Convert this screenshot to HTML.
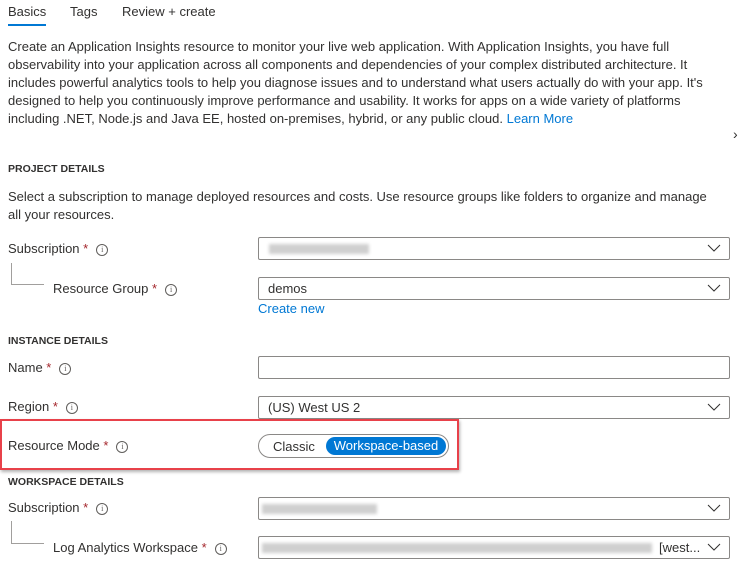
<!DOCTYPE html>
<html><head><style>
body{margin:0;width:738px;height:570px;overflow:hidden;background:#fff;font-family:"Liberation Sans",sans-serif;color:#323130;font-size:13px;position:relative}
.a{position:absolute;white-space:nowrap}
.h{font-size:10.5px;font-weight:bold;color:#323130}
.req{color:#a4262c}
.i{display:inline-block;width:10px;height:10px;border:1px solid #605e5c;border-radius:50%;font-size:8px;line-height:10px;text-align:center;color:#605e5c;vertical-align:1px;margin-left:8px;font-family:"Liberation Serif",serif}
.box{position:absolute;left:258px;width:472px;border:1px solid #8a8886;border-radius:2px;height:23px;box-sizing:border-box}
.chev{position:absolute;right:8px;top:4px}
.blur{position:absolute;top:6px;height:10px;background:#bbb;filter:blur(1.5px);opacity:.7}
.p{font-size:13px;line-height:18px}
</style></head><body>
<div class="a" style="left:8px;top:4px">Basics</div>
<div class="a" style="left:8px;top:24px;width:38px;height:2px;background:#0078d4"></div>
<div class="a" style="left:70px;top:4px">Tags</div>
<div class="a" style="left:122px;top:4px">Review + create</div>
<div class="a p" style="left:8px;top:38px">Create an Application Insights resource to monitor your live web application. With Application Insights, you have full<br>observability into your application across all components and dependencies of your complex distributed architecture. It<br>includes powerful analytics tools to help you diagnose issues and to understand what users actually do with your app. It's<br>designed to help you continuously improve performance and usability. It works for apps on a wide variety of platforms<br>including .NET, Node.js and Java EE, hosted on-premises, hybrid, or any public cloud. <span style="color:#0078d4">Learn More</span></div>
<div class="a" style="left:733px;top:126px;font-size:14px">›</div>
<div class="a h" style="left:8px;top:163px">PROJECT DETAILS</div>
<div class="a p" style="left:8px;top:188px">Select a subscription to manage deployed resources and costs. Use resource groups like folders to organize and manage<br>all your resources.</div>
<div class="a" style="left:8px;top:241px">Subscription <span class="req">*</span><span class="i">i</span></div>
<div class="a" style="left:11px;top:263px;width:32px;height:21px;border-left:1px solid #a19f9d;border-bottom:1px solid #a19f9d"></div>
<div class="a" style="left:53px;top:281px">Resource Group <span class="req">*</span><span class="i">i</span></div>
<div class="box" style="top:237px"><div class="blur" style="left:10px;width:100px"></div><svg class="chev" width="14" height="12"><path d="M1 3l6 6 6-6" fill="none" stroke="#323130"/></svg></div>
<div class="box" style="top:277px"><span class="a" style="left:9px;top:3px">demos</span><svg class="chev" width="14" height="12"><path d="M1 3l6 6 6-6" fill="none" stroke="#323130"/></svg></div>
<div class="a" style="left:258px;top:301px;color:#0078d4">Create new</div>
<div class="a h" style="left:8px;top:335px">INSTANCE DETAILS</div>
<div class="a" style="left:8px;top:360px">Name <span class="req">*</span><span class="i">i</span></div>
<div class="box" style="top:356px"></div>
<div class="a" style="left:8px;top:399px">Region <span class="req">*</span><span class="i">i</span></div>
<div class="box" style="top:396px"><span class="a" style="left:9px;top:3px">(US) West US 2</span><svg class="chev" width="14" height="12"><path d="M1 3l6 6 6-6" fill="none" stroke="#323130"/></svg></div>
<div class="a" style="left:0;top:419px;width:459px;height:51px;border:2px solid #e8414a;box-sizing:border-box;box-shadow:1px 2px 3px rgba(0,0,0,.3)"></div>
<div class="a" style="left:8px;top:438px">Resource Mode <span class="req">*</span><span class="i">i</span></div>
<div class="a" style="left:258px;top:434px;width:191px;height:24px;border:1px solid #8a8886;border-radius:12px;box-sizing:border-box">
<span class="a" style="left:14px;top:4px">Classic</span>
<span class="a" style="left:67px;top:2px;width:120px;height:18px;background:#0078d4;border-radius:9px;color:#fff;text-align:center;line-height:18px">Workspace-based</span></div>
<div class="a h" style="left:8px;top:476px">WORKSPACE DETAILS</div>
<div class="a" style="left:8px;top:500px">Subscription <span class="req">*</span><span class="i">i</span></div>
<div class="a" style="left:11px;top:521px;width:32px;height:22px;border-left:1px solid #a19f9d;border-bottom:1px solid #a19f9d"></div>
<div class="a" style="left:53px;top:540px">Log Analytics Workspace <span class="req">*</span><span class="i">i</span></div>
<div class="box" style="top:497px"><div class="blur" style="left:3px;width:115px"></div><svg class="chev" width="14" height="12"><path d="M1 3l6 6 6-6" fill="none" stroke="#323130"/></svg></div>
<div class="box" style="top:536px"><div class="blur" style="left:3px;width:390px"></div><span class="a" style="left:400px;top:3px">[west...</span><svg class="chev" width="14" height="12"><path d="M1 3l6 6 6-6" fill="none" stroke="#323130"/></svg></div>
</body></html>
